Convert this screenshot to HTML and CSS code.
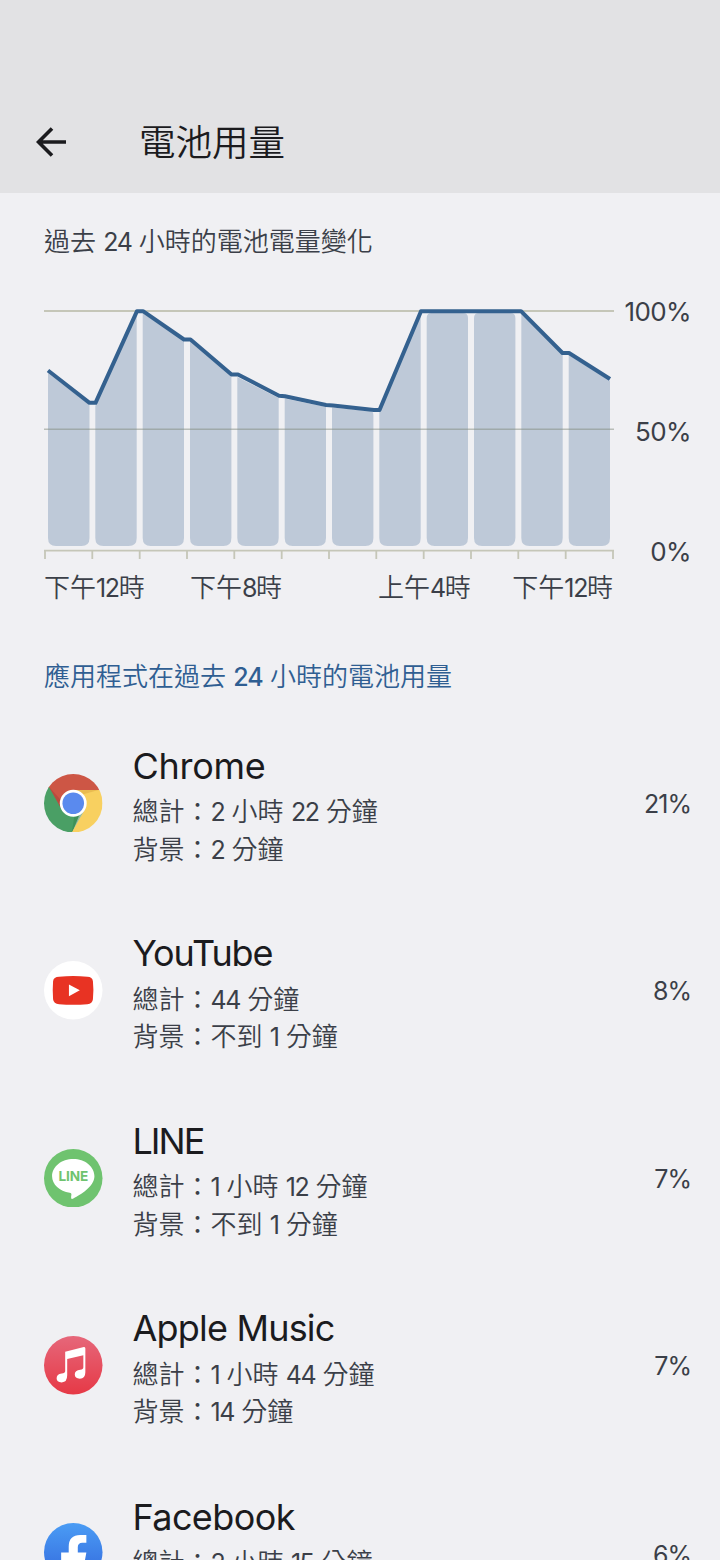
FILE: index.html
```html
<!DOCTYPE html>
<html lang="zh-TW">
<head>
<meta charset="utf-8">
<title>電池用量</title>
<link rel="stylesheet" href="styles.css">
</head>
<body>
<header class="bar">
  <svg class="back" viewBox="0 0 32 32"><path d="M30 16H3M16 2.500L2.500 16L16 29.500" fill="none" stroke="#1b1b1e" stroke-width="3.600"/></svg>
  <h1>電池用量</h1>
</header>
<main>
  <h2 class="caption">過去 <span class="num">24</span> 小時的電池電量變化</h2>
  <section class="chart">
    <svg class="plot" viewBox="44 300 570 262">
      <path d="M44 311H614" stroke="#c5c6b8" stroke-width="2"/>
      <g fill="#bec9d8">
        <path d="M48 373L89.500 405V538q0 8-8 8H56q-8 0-8-8z"/>
        <path d="M95.300 406L136.700 313V538q0 8-8 8H103.300q-8 0-8-8z"/>
        <path d="M142.700 313L184 341V538q0 8-8 8H150.700q-8 0-8-8z"/>
        <path d="M190 341L231.400 376V538q0 8-8 8H198q-8 0-8-8z"/>
        <path d="M237.300 377L278.700 398V538q0 8-8 8H245.300q-8 0-8-8z"/>
        <path d="M284.700 398.500L326 407V538q0 8-8 8H292.700q-8 0-8-8z"/>
        <path d="M332 407.500L370 411q3.400 0 3.400 4V538q0 8-8 8H340q-8 0-8-8z"/>
        <path d="M379.300 412L420.700 315V538q0 8-8 8H387.300q-8 0-8-8z"/>
        <path d="M426.700 318q0-5 5-5H463q5 0 5 5V538q0 8-8 8H434.700q-8 0-8-8z"/>
        <path d="M474 318q0-5 5-5H510.400q5 0 5 5V538q0 8-8 8H482q-8 0-8-8z"/>
        <path d="M521.300 313L562.700 355V538q0 8-8 8H529.300q-8 0-8-8z"/>
        <path d="M568.700 355L610 381V538q0 8-8 8H576.700q-8 0-8-8z"/>
      </g>
      <path d="M44 429.300H614" stroke="#7d8577" stroke-opacity=".48" stroke-width="1.600"/>
      <path d="M44 550.700H614M45 550V559M92.300 550V559M139.700 550V559M187 550V559M234.300 550V559M281.700 550V559M329 550V559M376.300 550V559M423.700 550V559M471 550V559M518.300 550V559M565.700 550V559M613 550V559" stroke="#c5c6b8" stroke-width="1.800" fill="none"/>
      <path d="M48 370.500L89.500 402.800H95.500L137 311.200H143L184 339.500H190.500L231.500 374.500H238L279 395.700L285 396.300L326 405L333 405.600L374 410H379.500L421 311.200H521L562.500 353H569L610 379" stroke="#34618f" stroke-width="4" stroke-linejoin="round" fill="none"/>
    </svg>
    <div class="y-axis"><span>100%</span><span>50%</span><span>0%</span></div>
    <div class="x-axis"><span>下午<span class="num twelve">12</span>時</span><span>下午<span class="num">8</span>時</span><span>上午<span class="num">4</span>時</span><span>下午<span class="num twelve">12</span>時</span></div>
  </section>
  <h2 class="section-title">應用程式在過去 <b class="num">24</b> 小時的電池用量</h2>
  <ul class="apps">
    <li class="app">
      <svg class="icon" viewBox="0 0 58 58">
        <defs><clipPath id="disc"><circle cx="29" cy="29" r="29"/></clipPath></defs>
        <g clip-path="url(#disc)">
          <path d="M0 0H58V16H29L16 36L4 13z" fill="#cd5645"/>
          <path d="M4.500 12L17.700 35.500L29 42L37 36L28 58H0V12z" fill="#4a9f65"/>
          <path d="M29 15.800H58V58H27.500L40.300 35.500z" fill="#f8d060"/>
          <path d="M29 15.800H54L39 20z" fill="#dca944" opacity=".55"/>
          <path d="M5 13L17.700 35.500L16 25z" fill="#a84038" opacity=".5"/>
          <path d="M27.500 58L40.300 35.500L30 43z" fill="#34834c" opacity=".5"/>
        </g>
        <circle cx="29" cy="29" r="13.300" fill="#fff"/><circle cx="29" cy="29" r="10.700" fill="#5a8aee"/>
      </svg>
      <div class="info"><h3 class="n-chrome">Chrome</h3><p>總計：<span class="num">2</span> 小時 <span class="num">22</span> 分鐘</p><p>背景：<span class="num">2</span> 分鐘</p></div>
      <span class="pct">21%</span>
    </li>
    <li class="app">
      <svg class="icon" viewBox="0 0 58 58"><circle cx="29" cy="29" r="29" fill="#fff"/><path d="M15 15.500Q29 14 43 15.500Q48 15.500 48.500 20Q49.500 29 48.500 38Q48 42.500 43 42.800Q29 44 15 42.800Q9.500 42.500 9 38Q8.300 29 9 20Q9.500 15.500 15 15.500z" fill="#e83323"/><path d="M24.700 23.200L35.500 29L24.700 35z" fill="#fff"/></svg>
      <div class="info"><h3 class="n-youtube">YouTube</h3><p>總計：<span class="num">44</span> 分鐘</p><p>背景：不到 <span class="num">1</span> 分鐘</p></div>
      <span class="pct">8%</span>
    </li>
    <li class="app">
      <svg class="icon" viewBox="0 0 58 58"><circle cx="29" cy="29" r="29" fill="#6fc36f"/><path d="M29 10C17.500 10 8 17.400 8 27C8 35.200 15.500 42 25.500 43.300C28.500 43.800 26.500 46 27 48.800C27.200 50 28.300 49.500 29.500 48.800C36 45.500 50 37 50 27C50 17.400 40.500 10 29 10z" fill="#fff"/><text class="line-mark" x="14.300" y="32" textLength="29.500">LINE</text></svg>
      <div class="info"><h3 class="n-line">LINE</h3><p>總計：<span class="num">1</span> 小時 <span class="num">12</span> 分鐘</p><p>背景：不到 <span class="num">1</span> 分鐘</p></div>
      <span class="pct">7%</span>
    </li>
    <li class="app">
      <svg class="icon" viewBox="0 0 58 58"><defs><linearGradient id="music" x2="0" y2="1"><stop stop-color="#e6677a"/><stop offset="1" stop-color="#e63946"/></linearGradient></defs><circle cx="29" cy="29" r="29" fill="url(#music)"/><path d="M21 15.500L39.500 11Q41 10.700 41 12.500V36Q41 42.300 35.500 42.300Q30.500 42.300 30.500 38Q30.500 34 36 33.500Q39 33 39 31V19L23 22.800V39Q23 46 17.500 46Q12.500 46 12.500 42Q12.500 38 17.500 37.300Q21 36.800 21 35z" fill="#fff"/></svg>
      <div class="info"><h3 class="n-music">Apple Music</h3><p>總計：<span class="num">1</span> 小時 <span class="num">44</span> 分鐘</p><p>背景：<span class="num">14</span> 分鐘</p></div>
      <span class="pct">7%</span>
    </li>
    <li class="app">
      <svg class="icon" viewBox="0 0 58 58"><defs><linearGradient id="fb" x2="0" y2="1"><stop stop-color="#4a9cf4"/><stop offset=".6" stop-color="#3c7ce6"/><stop offset="1" stop-color="#3068d8"/></linearGradient></defs><circle cx="29" cy="29" r="29" fill="url(#fb)"/><path d="M24.500 58V37.500H17V29.300H24.500V23.500Q24.500 11.800 36 11.800H42V19.500H38Q33.500 19.500 33.500 24V29.300H42L40.500 37.500H33.500V58z" fill="#fff"/></svg>
      <div class="info"><h3 class="n-facebook">Facebook</h3><p>總計：<span class="num">2</span> 小時 <span class="num">15</span> 分鐘</p></div>
      <span class="pct">6%</span>
    </li>
  </ul>
</main>
</body>
</html>
```
FILE: styles.css
```css
* { box-sizing: border-box; margin: 0; padding: 0; }
html { height: 1560px; overflow: hidden; }
body {
  height: 1560px;
  overflow: hidden;
  background: #f0f0f3;
  color: #3b3f48;
  font: 350 26px/37.5px Inter, "Noto Sans CJK TC", sans-serif;
}
.bar {
  display: flex;
  align-items: center;
  height: 193px;
  padding: 91px 36px 0;
  background: #e2e2e4;
  color: #1b1b1e;
}
.back { width: 32px; height: 32px; }
h1 { margin-left: 71px; padding-top: 1px; font-size: 36.5px; font-weight: 350; line-height: 54px; }
h2, h3 { font-weight: 350; }
h2 { font-size: 26px; white-space: nowrap; }
.caption { margin: 30px 44px 0; line-height: 37px; }
.num { font-size: 25px; font-weight: 400; line-height: 1; letter-spacing: -1.5px; }
.twelve { letter-spacing: -1.4px; }
.chart {
  display: grid;
  grid-template-columns: 570px 77px;
  grid-template-rows: 262px 50px;
  margin: 40px 0 0 44px;
}
.plot { width: 570px; height: 262px; }
.y-axis {
  display: flex;
  flex-direction: column;
  justify-content: space-between;
  align-items: flex-end;
  height: 277px;
  margin-top: -7px;
  font-weight: 400;
  letter-spacing: -0.6px;
  white-space: nowrap;
}
.x-axis { display: grid; grid-template-columns: 146px 188px 91px 144px; padding: 7px 0 0; white-space: nowrap; }
.x-axis > :last-child { text-align: right; }
.section-title { margin: 46px 0 0 44px; color: #2f5e92; line-height: 37px; }
b.num { font-weight: 500; letter-spacing: -1px; }
.apps { padding-top: 14px; list-style: none; }
.app {
  display: flex;
  align-items: center;
  height: 187.5px;
  padding: 0 29px 0 44px;
}
.app:last-child { align-items: flex-start; }
.app:last-child .icon { margin-top: 64px; }
.app:last-child .info { margin-top: 29.5px; }
.app:last-child .pct { margin-top: 75px; }
.icon { width: 58.5px; height: 58.5px; flex: none; }
.line-mark { fill: #6fc36f; font-size: 13.5px; font-weight: 700; }
.info { flex: 1; margin-left: 30px; padding-top: 2px; white-space: nowrap; }
h3 { color: #1b1b1e; font-size: 36px; font-weight: 400; line-height: 53.5px; }
.n-chrome { letter-spacing: -0.3px; }
.n-youtube { letter-spacing: -1.1px; }
.n-line { letter-spacing: -2px; }
.n-music { letter-spacing: -0.8px; }
.n-facebook { letter-spacing: -0.6px; }
.pct { padding-top: 3px; font-size: 25px; font-weight: 400; letter-spacing: -1px; }
```
